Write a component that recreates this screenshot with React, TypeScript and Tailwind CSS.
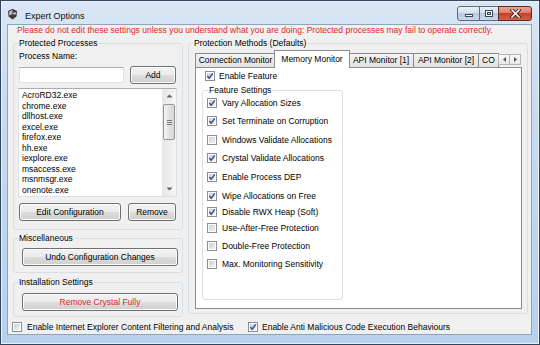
import React from 'react';

const processes = [
  'AcroRD32.exe',
  'chrome.exe',
  'dllhost.exe',
  'excel.exe',
  'firefox.exe',
  'hh.exe',
  'iexplore.exe',
  'msaccess.exe',
  'msnmsgr.exe',
  'onenote.exe',
];

// gaps between rows are uneven in the original dialog
const features = [
  { label: 'Vary Allocation Sizes', checked: true, gap: 'mt-[3px]' },
  { label: 'Set Terminate on Corruption', checked: true, gap: 'mt-[8px]' },
  { label: 'Windows Validate Allocations', checked: false, gap: 'mt-[9px]' },
  { label: 'Crystal Validate Allocations', checked: true, gap: 'mt-[8px]' },
  { label: 'Enable Process DEP', checked: true, gap: 'mt-[9px]' },
  { label: 'Wipe Allocations on Free', checked: true, gap: 'mt-[9px]' },
  { label: 'Disable RWX Heap (Soft)', checked: true, gap: 'mt-[6px]' },
  { label: 'Use-After-Free Protection', checked: false, gap: 'mt-[6px]' },
  { label: 'Double-Free Protection', checked: false, gap: 'mt-[8px]' },
  { label: 'Max. Monitoring Sensitivity', checked: false, gap: 'mt-[8px]' },
];

function CheckBox({ checked }: { checked?: boolean }) {
  return (
    <span className="relative w-[10px] h-[10px] shrink-0 border border-[#8e8f8f] bg-white p-[1px] flex">
      <span
        className={
          checked
            ? 'flex-1 bg-[linear-gradient(135deg,#c2cfe2,#f3f6fa)]'
            : 'flex-1 bg-[linear-gradient(135deg,#cbcccf,#f6f6f6)]'
        }
      />
      {checked && (
        <svg className="absolute left-[-1px] top-[-1px] w-[10px] h-[10px]" viewBox="0 0 10 10">
          <path d="M2.3 5.1 L4.2 7.3 L7.8 2.4" fill="none" stroke="#3d5283" strokeWidth="1.5" />
        </svg>
      )}
    </span>
  );
}

function Button({ className = '', children }: { className?: string; children: React.ReactNode }) {
  return (
    <div
      className={`flex items-center justify-center border border-[#707070] rounded-[3px] bg-[linear-gradient(#f2f2f2_0%,#ebebeb_50%,#dddddd_50%,#cfcfcf_100%)] shadow-[inset_0_0_0_1px_#fcfcfc] leading-[10px] ${className}`}
    >
      {children}
    </div>
  );
}

function WindowIcon() {
  return (
    <svg className="w-[11px] h-[12px]" viewBox="0 0 11 12">
      <path d="M1 3 L5.5 0.8 L10 3 L9.5 8.5 L5.5 11.5 L1.5 8.5 Z" fill="#3c3c3c" />
      <path d="M2 3.5 L5.5 1.8 L5.5 6 L2.3 7.5 Z" fill="#b9b9b9" />
      <path d="M6.2 5 L9 4.2 L8.6 6.2 L6.2 6.6 Z" fill="#e6e6e6" />
    </svg>
  );
}

function CaptionButtons() {
  return (
    <div className="flex ml-auto mt-[5px] mr-[7px]">
      <div className="w-[23px] h-[15px] border border-[#5a6b80] rounded-l-[3px] bg-[linear-gradient(#e9f0f8_0%,#d3dfec_50%,#b9cadf_50%,#c9d8ea_100%)] flex items-end justify-center pb-[3px]">
        <span className="w-[8px] h-[3px] bg-white border border-[#38475a]" />
      </div>
      <div className="w-[20px] h-[15px] -ml-[1px] border border-[#5a6b80] bg-[linear-gradient(#e9f0f8_0%,#d3dfec_50%,#b9cadf_50%,#c9d8ea_100%)] flex items-center justify-center">
        <span className="w-[8px] h-[7px] border border-[#38475a] bg-white p-[1px] flex">
          <span className="flex-1 border border-[#38475a] bg-[#c9d8ea]" />
        </span>
      </div>
      <div className="w-[34px] h-[15px] -ml-[1px] border border-[#5b2a22] rounded-r-[3px] bg-[linear-gradient(#eba392_0%,#da7a63_50%,#c6412b_50%,#d2604a_100%)] flex items-center justify-center">
        <svg className="w-[11px] h-[9px]" viewBox="0 0 11 9">
          <path d="M2 1 L9 8 M9 1 L2 8" stroke="#3a1a14" strokeWidth="3.2" strokeLinecap="square" />
          <path d="M2 1 L9 8 M9 1 L2 8" stroke="#ffffff" strokeWidth="1.6" strokeLinecap="square" />
        </svg>
      </div>
    </div>
  );
}

function ScrollBar() {
  return (
    <div className="w-[14px] flex flex-col bg-[linear-gradient(90deg,#e6e6e6,#f5f5f5)]">
      <div className="h-[14px] flex items-center justify-center">
        <svg className="w-[7px] h-[4px]" viewBox="0 0 7 4">
          <path d="M0.5 3.5 L3.5 0.5 L6.5 3.5 Z" fill="#606060" />
        </svg>
      </div>
      <div className="mt-[1px] mx-[1px] h-[36px] border border-[#979797] rounded-[2px] bg-[linear-gradient(90deg,#f4f4f4,#e2e2e2_50%,#d6d6d6)] flex flex-col items-center justify-center gap-[1px]">
        <span className="w-[5px] h-[1px] bg-[#7a7a7a]" />
        <span className="w-[5px] h-[1px] bg-[#7a7a7a]" />
        <span className="w-[5px] h-[1px] bg-[#7a7a7a]" />
      </div>
      <div className="mt-auto h-[14px] flex items-center justify-center">
        <svg className="w-[7px] h-[4px]" viewBox="0 0 7 4">
          <path d="M0.5 0.5 L3.5 3.5 L6.5 0.5 Z" fill="#606060" />
        </svg>
      </div>
    </div>
  );
}

function Tab({ className = '', children }: { className?: string; children: React.ReactNode }) {
  return (
    <div
      className={`h-[14px] border border-b-0 border-[#898c95] bg-[linear-gradient(#f3f3f3,#e2e2e2)] flex items-center justify-center whitespace-nowrap overflow-hidden ${className}`}
    >
      {children}
    </div>
  );
}

export default function App() {
  return (
    <div className="w-[540px] h-[345px] overflow-hidden flex flex-col border border-[#34465c] bg-[linear-gradient(180deg,#dae6f4_0%,#c8dbef_30%,#b7d1ec_100%)] shadow-[inset_0_0_0_1px_#e8f1fb] text-[8.5px] text-black font-['Liberation_Sans',Arial,sans-serif]">
      {/* title bar */}
      <div className="h-[23px] flex items-start shrink-0">
        <div className="ml-[6px] mt-[7px]">
          <WindowIcon />
        </div>
        <span className="ml-[7px] mt-[10px] text-[9px] leading-[10px] text-[#111]">Expert Options</span>
        <CaptionButtons />
      </div>

      {/* client area */}
      <div className="ml-[6px] mr-[7px] h-[311px] border border-[#8ea4bd] bg-[#f0f0f0] flex flex-col">
        <div className="pl-[9px] leading-[10px] text-[#e2262b] whitespace-nowrap">
          Please do not edit these settings unless you understand what you are doing: Protected processes may fail to operate correctly.
        </div>

        <div className="flex h-[282px]">
          {/* left column */}
          <div className="ml-[5px] w-[170px] flex flex-col">
            <fieldset className="mt-[3px] h-[192px] border border-[#d5dfe5] rounded-[3px]">
              <legend className="ml-[4px] px-[1px] leading-[10px]">Protected Processes</legend>
              <div className="pl-[5px] mt-[3px] leading-[10px]">Process Name:</div>
              <div className="flex items-start mt-[5px]">
                <div className="ml-[5px] mt-[1px] w-[105px] h-[16px] bg-white border border-[#dbdfe6] border-t-[#abadb3]" />
                <Button className="ml-[6px] w-[46px] h-[18px]">Add</Button>
              </div>
              <div className="ml-[4px] mt-[4px] w-[159px] h-[109px] bg-white border border-[#dbdfe6] border-t-[#abadb3] flex">
                <div className="flex-1 pl-[3px] pt-[1px]">
                  {processes.map((p) => (
                    <div key={p} className="leading-[10.5px] h-[10.5px]">
                      {p}
                    </div>
                  ))}
                </div>
                <ScrollBar />
              </div>
              <div className="flex mt-[6px]">
                <Button className="ml-[5px] w-[102px] h-[18px]">Edit Configuration</Button>
                <Button className="ml-[7px] w-[48px] h-[18px]">Remove</Button>
              </div>
            </fieldset>

            <fieldset className="mt-[3px] h-[40px] border border-[#d5dfe5] rounded-[3px]">
              <legend className="ml-[4px] px-[1px] leading-[10px]">Miscellaneous</legend>
              <Button className="ml-[8px] mt-[5px] w-[156px] h-[18px]">Undo Configuration Changes</Button>
            </fieldset>

            <fieldset className="mt-[4px] h-[40px] border border-[#d5dfe5] rounded-[3px]">
              <legend className="ml-[4px] px-[1px] leading-[10px]">Installation Settings</legend>
              <Button className="ml-[8px] mt-[6px] w-[156px] h-[18px] text-[#e2262b]">Remove Crystal Fully</Button>
            </fieldset>
          </div>

          {/* right column */}
          <div className="ml-[5px] w-[340px]">
            <fieldset className="mt-[3px] h-[276px] border border-[#d5dfe5] rounded-[3px]">
              <legend className="ml-[4px] px-[1px] leading-[10px]">Protection Methods (Defaults)</legend>
              <div className="ml-[6px] mt-[2px] h-[17px] flex items-end relative z-10">
                <Tab className="w-[81px]">Connection Monitor</Tab>
                <div className="relative z-10 -ml-[2px] -mb-[1px] w-[76px] h-[18px] border border-b-0 border-[#898c95] bg-white flex items-center justify-center pb-[1px] whitespace-nowrap">
                  Memory Monitor
                </div>
                <Tab className="-ml-[2px] w-[66px]">API Monitor [1]</Tab>
                <Tab className="-ml-[1px] w-[66px]">API Monitor [2]</Tab>
                <Tab className="-ml-[1px] w-[21px] !justify-start pl-[3px]">CO</Tab>
                <div className="flex mb-[2px] -ml-[1px]">
                  <div className="w-[12px] h-[11px] border border-[#b5b5b5] bg-[linear-gradient(#fafafa,#e6e6e6)] flex items-center justify-center">
                    <svg className="w-[3px] h-[5px]" viewBox="0 0 3 5">
                      <path d="M3 0 L0 2.5 L3 5 Z" fill="#555" />
                    </svg>
                  </div>
                  <div className="w-[12px] h-[11px] -ml-[1px] border border-[#b5b5b5] bg-[linear-gradient(#fafafa,#e6e6e6)] flex items-center justify-center">
                    <svg className="w-[3px] h-[5px]" viewBox="0 0 3 5">
                      <path d="M0 0 L3 2.5 L0 5 Z" fill="#555" />
                    </svg>
                  </div>
                </div>
              </div>
              <div className="ml-[6px] w-[327px] h-[242px] border border-[#898c95] bg-white flex flex-col">
                <div className="flex items-center mt-[3px] ml-[9px] leading-[10px]">
                  <CheckBox checked />
                  <span className="ml-[4px]">Enable Feature</span>
                </div>
                <fieldset className="ml-[6px] mt-[4px] w-[141px] h-[215px] border border-[#d5dfe5] rounded-[3px]">
                  <legend className="ml-[5px] px-[1px] leading-[10px]">Feature Settings</legend>
                  {features.map((f) => (
                    <div key={f.label} className={`flex items-center ml-[4px] leading-[10px] whitespace-nowrap ${f.gap}`}>
                      <CheckBox checked={f.checked} />
                      <span className="ml-[5px]">{f.label}</span>
                    </div>
                  ))}
                </fieldset>
              </div>
            </fieldset>
          </div>
        </div>

        <div className="flex items-center mt-[5px] leading-[10px] whitespace-nowrap">
          <div className="ml-[4px] w-[236px] flex items-center">
            <CheckBox />
            <span className="ml-[5px]">Enable Internet Explorer Content Filtering and Analysis</span>
          </div>
          <CheckBox checked />
          <span className="ml-[4px]">Enable Anti Malicious Code Execution Behaviours</span>
        </div>
      </div>
    </div>
  );
}
